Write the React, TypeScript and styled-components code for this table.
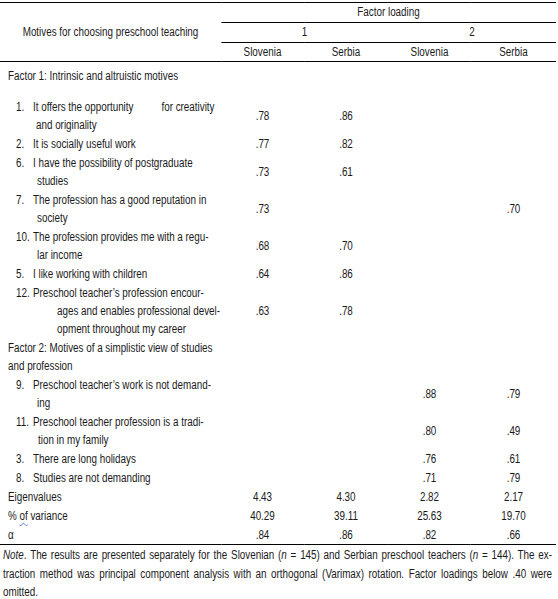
import React from 'react';
import styled, { createGlobalStyle } from 'styled-components';

/* The reference is set in a narrow grotesque (Arial Narrow). With no narrow face
   installed, the sheet is laid out at 1/0.82 of its width in Liberation Sans and
   condensed horizontally as a whole. */
const NARROW = 0.82;
const px = (screen: number) => screen / NARROW;

const GlobalStyle = createGlobalStyle`
  html, body { margin: 0; padding: 0; background: #fff; }
  body {
    font-family: 'Liberation Sans', Arial, sans-serif;
    font-size: 12px;
    color: #1a1a1a;
    overflow: hidden;
  }
`;

const Sheet = styled.div`
  width: ${px(556)}px;
  padding-top: 2px;
  transform: scaleX(${NARROW});
  transform-origin: 0 0;
`;

const Table = styled.table`
  width: ${px(556)}px;
  border-collapse: collapse;
  table-layout: fixed;
  border-top: 1px solid #000;
  border-bottom: 1px solid #000;
`;

const HeadRow = styled.tr<{ $h: number }>`
  height: ${(p) => p.$h}px;
`;

const HeadCell = styled.th<{ $rule?: boolean }>`
  font-weight: normal;
  text-align: center;
  vertical-align: middle;
  padding: 0;
  line-height: 17px;
  border-bottom: ${(p) => (p.$rule ? '1px solid #000' : 'none')};
`;

const Row = styled.tr<{ $pt: number; $pb: number }>`
  & > td {
    padding-top: ${(p) => p.$pt}px;
    padding-bottom: ${(p) => p.$pb}px;
  }
`;

const DescCell = styled.td`
  padding-left: 0;
  padding-right: 0;
  vertical-align: top;
`;

const ValueCell = styled.td`
  text-align: center;
  vertical-align: middle;
  padding-left: 0;
  padding-right: 0;
  line-height: 18px;
`;

const Line = styled.div<{ $indent: number }>`
  line-height: 18px;
  padding-left: ${(p) => px(p.$indent)}px;
  white-space: nowrap;
`;

const FirstLine = styled.div`
  display: flex;
  line-height: 18px;
  padding-left: ${px(16)}px;
  white-space: nowrap;
`;

const Num = styled.span`
  width: ${px(17)}px;
  flex: none;
`;

const Gap = styled.span<{ $w: number }>`
  display: inline-block;
  width: ${(p) => px(p.$w)}px;
`;

const Squiggle = styled.span`
  text-decoration: underline wavy #3b6fd8;
  text-decoration-thickness: 1px;
  text-underline-offset: 2px;
`;

const Note = styled.div`
  margin-top: 1px;
  padding-left: ${px(3)}px;
  width: ${px(549)}px;
`;

const NoteLine = styled.div<{ $last?: boolean }>`
  line-height: 18.5px;
  white-space: nowrap;
  text-align: ${(p) => (p.$last ? 'left' : 'justify')};
  text-align-last: ${(p) => (p.$last ? 'left' : 'justify')};
`;

type Item = {
  kind: 'item' | 'group' | 'stat';
  num?: string;
  lines: React.ReactNode[];
  indent?: number;
  values?: string[];
  pt?: number;
  pb?: number;
};

const rows: Item[] = [
  { kind: 'group', lines: ['Factor 1: Intrinsic and altruistic motives'], pt: 5, pb: 12 },
  {
    kind: 'item', num: '1.',
    lines: [<>It offers the opportunity<Gap $w={28} />for creativity</>, 'and originality'],
    indent: 36, values: ['.78', '.86', '', ''],
  },
  { kind: 'item', num: '2.', lines: ['It is socially useful work'], values: ['.77', '.82', '', ''] },
  {
    kind: 'item', num: '6.',
    lines: ['I have the possibility of postgraduate', 'studies'],
    indent: 37, values: ['.73', '.61', '', ''],
  },
  {
    kind: 'item', num: '7.',
    lines: ['The profession has a good reputation in', 'society'],
    indent: 37, values: ['.73', '', '', '.70'],
  },
  {
    kind: 'item', num: '10.',
    lines: ['The profession provides me with a regu-', 'lar income'],
    indent: 37, values: ['.68', '.70', '', ''],
  },
  { kind: 'item', num: '5.', lines: ['I like working with children'], values: ['.64', '.86', '', ''] },
  {
    kind: 'item', num: '12.',
    lines: [
      'Preschool teacher\u2019s profession encour-',
      'ages and enables professional devel-',
      'opment throughout my career',
    ],
    indent: 57, values: ['.63', '.78', '', ''],
  },
  { kind: 'group', lines: ['Factor 2: Motives of a simplistic view of studies', 'and profession'] },
  {
    kind: 'item', num: '9.',
    lines: ['Preschool teacher\u2019s work is not demand-', 'ing'],
    indent: 37, values: ['', '', '.88', '.79'],
  },
  {
    kind: 'item', num: '11.',
    lines: ['Preschool teacher profession is a tradi-', 'tion in my family'],
    indent: 38, values: ['', '', '.80', '.49'],
  },
  { kind: 'item', num: '3.', lines: ['There are long holidays'], values: ['', '', '.76', '.61'] },
  { kind: 'item', num: '8.', lines: ['Studies are not demanding'], values: ['', '', '.71', '.79'] },
  { kind: 'stat', lines: ['Eigenvalues'], values: ['4.43', '4.30', '2.82', '2.17'] },
  {
    kind: 'stat',
    lines: [<>% <Squiggle>of</Squiggle> variance</>],
    values: ['40.29', '39.11', '25.63', '19.70'],
  },
  { kind: 'stat', lines: ['\u03b1'], values: ['.84', '.86', '.82', '.66'] },
];

function Description({ row }: { row: Item }) {
  if (row.kind === 'item') {
    const [first, ...rest] = row.lines;
    return (
      <DescCell>
        <FirstLine>
          <Num>{row.num}</Num>
          <span>{first}</span>
        </FirstLine>
        {rest.map((l, i) => (
          <Line key={i} $indent={row.indent ?? 37}>{l}</Line>
        ))}
      </DescCell>
    );
  }
  return (
    <DescCell>
      {row.lines.map((l, i) => (
        <Line key={i} $indent={8}>{l}</Line>
      ))}
    </DescCell>
  );
}

const colWidths = [221, 83, 84, 83, 85];

export default function App() {
  return (
    <Sheet>
      <GlobalStyle />
      <Table>
        <colgroup>
          {colWidths.map((w, i) => (
            <col key={i} style={{ width: px(w) }} />
          ))}
        </colgroup>
        <thead>
          <HeadRow $h={20}>
            <HeadCell rowSpan={3} $rule>Motives for choosing preschool teaching</HeadCell>
            <HeadCell colSpan={4} $rule>Factor loading</HeadCell>
          </HeadRow>
          <HeadRow $h={20}>
            <HeadCell colSpan={2} $rule>1</HeadCell>
            <HeadCell colSpan={2} $rule>2</HeadCell>
          </HeadRow>
          <HeadRow $h={19}>
            <HeadCell $rule>Slovenia</HeadCell>
            <HeadCell $rule>Serbia</HeadCell>
            <HeadCell $rule>Slovenia</HeadCell>
            <HeadCell $rule>Serbia</HeadCell>
          </HeadRow>
        </thead>
        <tbody>
          {rows.map((row, i) => (
            <Row key={i} $pt={row.pt ?? 0.5} $pb={row.pb ?? 0.5}>
              <Description row={row} />
              {[0, 1, 2, 3].map((c) => (
                <ValueCell key={c}>{row.values?.[c] ?? ''}</ValueCell>
              ))}
            </Row>
          ))}
        </tbody>
      </Table>
      <Note>
        <NoteLine>
          <i>Note</i>. The results are presented separately for the Slovenian (<i>n</i> = 145) and
          Serbian preschool teachers (<i>n</i> = 144). The ex-
        </NoteLine>
        <NoteLine>
          traction method was principal component analysis with an orthogonal (Varimax) rotation.
          Factor loadings below .40 were
        </NoteLine>
        <NoteLine $last>omitted.</NoteLine>
      </Note>
    </Sheet>
  );
}
